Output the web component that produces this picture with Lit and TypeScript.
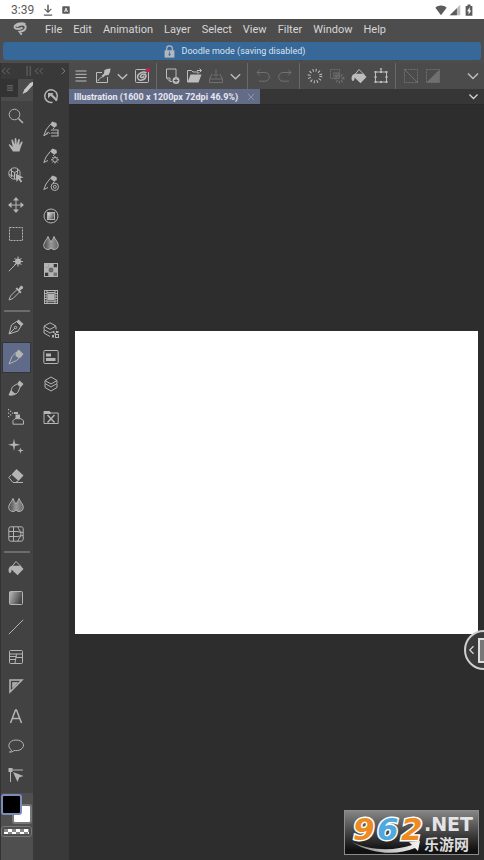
import { LitElement, html, svg, css } from "lit";
import { customElement, property, state } from "lit/decorators.js";
import { classMap } from "lit/directives/class-map.js";

const dropsArt = svg`
  <defs><linearGradient id="dg"><stop offset="0" stop-color="#444"/><stop offset=".5" stop-color="#999"/><stop offset="1" stop-color="#666"/></linearGradient></defs>
  <path class="l" style="fill:url(#dg)" d="M5 1.5C4 4.500 .7 7 .7 10.400a4.100 4.100 0 0 0 7.300 2.600 4.100 4.100 0 0 0 7.300-2.600C15.300 7 12 4.500 11 1.500 10.200 4 8.800 5.400 8 7 7.200 5.400 5.800 4 5 1.500Z"/>`;
const bucketArt = svg`
  <path class="l" d="M3.500 7 8 1.500 13 6.500"/>
  <path class="f" d="M4 5.800h8.500L15.500 9 9.500 15.200 4.800 10.800 3.600 9.600C3.500 12 3 13 2 13S.4 11.600.6 9.600C.8 7.500 2 6.200 4 5.800Z"/>`;
const penLead = svg`
  <path class="f" d="M7 3.500 9.300.5l4.200 1.500.4 3L11 6.500Z"/>
  <path class="l" d="M7.200 3.500 3 9 .8 14.500 5 12.500M11.500 6.500 10 8"/>`;

const art: Record<string, unknown> = {
  zoom: svg`<circle class="l" cx="6.500" cy="6.500" r="5.300"/><path class="l w" d="m10.500 10.500 4.500 4.500"/>`,
  hand: svg`<path class="f" d="M5 14.500 1 8.500c-.6-1 .6-1.600 1.300-.8L4.800 10 3.400 3.600c-.2-1.200 1.200-1.500 1.600-.4L6.700 7.500 6.700 1.900c0-1.200 1.600-1.200 1.700 0l.4 5.500L10.200 2.600c.3-1.200 1.800-.8 1.600.4l-.7 5.300 2-3.200c.6-1 1.800-.3 1.400.7L12.300 11.500 11.500 14.500Z"/>`,
  cube: svg`<circle class="l" cx="6.500" cy="6.500" r="5.700"/><path class="l" d="M2.500 3.500 6.500 5.500 10.500 3.500M6.500 5.500V12M3.500 2v8M9.500 2v5M1 7.500l5.500 2"/><path class="f" d="m7.500 6.500 8 4-3.300.8 2 3.200-1.600 1-2-3.200L8.500 15Z"/>`,
  move: svg`<path class="l" d="M8 2v12M2 8h12"/><path class="f" d="m8 0 3 3.500H5ZM8 16l3-3.500H5ZM0 8l3.500-3v6ZM16 8l-3.500-3v6Z"/>`,
  marquee: svg`<rect class="l" x="1.500" y="1.500" width="13" height="13" stroke-dasharray="2 1"/>`,
  wand: svg`<path class="l" d="M.8 15.200 8 8M10 .5v10M5 5.500h10M6.500 2l7 7M13.500 2l-7 7"/><circle class="f" cx="10" cy="5.500" r="3"/>`,
  dropper: svg`<path class="l" d="M9 4.500 2.500 11 1 15l4-1.500L11.500 7"/><path class="f" d="m7.500 3.500 1.500-1L10.500 4 12.500 1c1-1 3.500 1.200 2.400 2.500L12 5.500 13.500 7l-1 1.500Z"/>`,
  nib: svg`<path class="l" d="M8.500 2.500 3.500 6 1 15l9-3 3.200-5.200ZM1 15 7 9"/><circle class="l" cx="7.500" cy="8.500" r="1.200"/><path class="f" d="m8.500 2.500 2-2L15.500 5l-2.300 2.300Z"/>`,
  pencil: svg`<path class="l" d="M8.500 3 4 7.500 1 15l7.500-3.500L13.500 7"/><path class="f" d="M8 3.500 10.500.5l5 4.500L13 8 10.500 9 7.500 7Z"/>`,
  brush: svg`<path class="l" d="M9 4 5.500 6C3 7.500 4 11 1 15c4 .5 8-.5 9.500-4L12 7"/><path class="f" d="m9 4 2.500-3.500 4 3.500L12.500 7.500ZM1 15c.6-2 1-4 2.500-5 1 2 2.500 3 4.500 3.500C6 15 3.500 15.500 1 15Z"/>`,
  airbrush: svg`<path class="f" d="M0 0h1.200v1.200H0ZM0 3.500h1.200v1.200H0ZM0 7h1.200v1.200H0ZM2 1.700h1.200v1.200H2ZM2 5.200h1.200v1.200H2ZM4 3.500h1.200v1.200H4ZM6 3h4v2H6Z"/><path class="l" d="M5 15.200v-3.500l2-2h6l2.500 2v3.500Z"/><path class="f" d="M7.500 5.500H12v4H7.500Z"/>`,
  sparkle: svg`<path class="f" d="M6 .5 7 5.500 12.500 6.800 7 8 6 13 5 8 0 6.800 5 5.500ZM12.500 9.500l.7 2.300 2.600.7-2.600.7-.7 2.600-.7-2.600-2.300-.7 2.300-.7Z"/>`,
  eraser: svg`<path class="f" d="m8.500 1 7 6.500-5 5.500-7-6.500Z"/><path class="l" d="M3 7 .8 9.500 5 14.500h2.500L10 13M6 14.500h9"/>`,
  drops: dropsArt,
  mesh: svg`<rect class="l" x=".8" y=".8" width="14.400" height="14.400" rx="2"/><path class="l" d="M1 5.500h8l6 1M1 10.500h8l6-1M5.500 1v14M10 1c0 2 3 4 3 7s-3 5-3 7"/>`,
  bucket: bucketArt,
  gradient: svg`<defs><linearGradient id="gg" y2=".4"><stop offset="0" stop-color="#bbb"/><stop offset="1" stop-color="#444"/></linearGradient></defs><rect class="l" x="1.500" y="1.500" width="13" height="13" rx="1" style="fill:url(#gg)"/>`,
  line: svg`<path class="l" d="M.8 15.200 15.200.8"/>`,
  frame: svg`<rect class="l" x="1.500" y="1.500" width="13" height="13" rx="1"/><path class="l" d="M1.500 5h13M1.500 10.500h6M8.500 5 7 14M8 8.500h6.500M1.500 7.500h7"/>`,
  ruler: svg`<path class="l w" d="M2 2h12L2 14ZM5 5h3.500L5 8.500Z"/>`,
  text: svg`<path class="l w" d="m2.500 15 5-13h1l5 13M4.300 10.500h7.400"/>`,
  balloon: svg`<path class="l" d="M3.500 12C-1.500 9 .8 2 8 2s10 6 5 9.300C10.500 13 8 12.600 6 12.500 5 13.800 3 14.300 1.500 14 3 13.500 3.500 13 3.500 12Z"/>`,
  node: svg`<path class="f" d="M.5 1h4v4h-4ZM5 5l10.500 4-4.300 1.500L9.500 15Z"/><path class="l" d="M4 3h11M2.500 5v10"/>`,
  quick: svg`<path class="l w" d="M12.500 12.500A6.300 6.300 0 1 0 9.500 14.200M12.500 12.500A6.300 6.300 0 0 0 14.200 7"/><path class="f" d="M5 5h5.500L9.300 6.300l5.500 5.500-1.500 1.500L7.500 7.800 5 10.500Z"/>`,
  penList: svg`${penLead}<path class="l" d="M1 15c4-5 5-4 6-2M8 9h7.500M8 12h7.500M8 15h7.500M15 9v6"/>`,
  penGear: svg`${penLead}<circle class="l" cx="12" cy="11.800" r="2.300"/><path class="l" d="M12 8v1.500M12 14v1.500M8 11.800h1.500M14.500 11.800H16M9.300 9l1 1M13.700 13.500l1 1M14.700 9l-1 1M9.300 14.500l1-1"/>`,
  penRing: svg`${penLead}<circle class="l" cx="11.800" cy="11.800" r="3.700"/><circle class="l" cx="11.800" cy="11.800" r="1.500"/>`,
  wheel: svg`<defs><linearGradient id="wg" y2=".6"><stop offset="0" stop-color="#eee"/><stop offset="1" stop-color="#555"/></linearGradient></defs><circle class="l" cx="8" cy="8" r="7"/><rect class="l" x="4.500" y="4.500" width="7" height="7" style="fill:url(#wg)"/>`,
  palette: svg`<rect class="l" x="1.500" y="1.500" width="13" height="13"/><path class="f" d="M6 2h4v3.500H6ZM2 2h3.500v3.500H2ZM2 6h3.500v4H2ZM10.500 6H14v4h-3.500ZM6 10.500h4V14H6Z"/><path class="f" opacity=".5" d="M10.500 10.500H14V14h-3.500ZM7 7h2v2H7Z"/><path class="l" d="M5.800 2v12M10.200 2v12M2 5.800h12M2 10.200h12"/>`,
  film: svg`<rect class="l" x="1.500" y="1.500" width="13" height="13"/><path class="f" d="M4.500 4.500h7v7h-7Z"/><path class="l" d="M4 1.500v13M12 1.500v13M4 3.500h8M2 4.500h2M2 7h2M2 9.500h2M2 12h2M12 4.500h2M12 7h2M12 9.500h2M12 12h2M4 12.700h8"/>`,
  layers: svg`<path class="l" d="m8 1 6 3.500L8 8 2 4.500ZM2 4.500v3L8 11l6-3.500v-3M2 8v3.500L8 15l6-3.500V8"/>`,
  layersPlus: svg`<path class="l" d="m7 .8 6 3.300-6 3.300-6-3.300ZM1 4.500v3L7 11l2-1M1 8v3L7 14.500M13 4.500v3"/><path class="f" d="M9.500 9h2v2h-2ZM13 9h2.500v2H13ZM9 13h2v2.500H9ZM11.500 11h1.500v2h-1.500Z"/><rect class="l" x="12.500" y="12.500" width="3" height="3"/>`,
  props: svg`<rect class="l" x=".8" y="1.500" width="14.400" height="13" rx="1"/><path class="f" d="M3 4.500h5v3H3ZM3 9h9.500v3H3Z"/>`,
  folderX: svg`<path class="l" d="M1 14.500v-12h5L7.500 4h7.700v10.500Z"/><path class="f" d="M1 2h5.500L8 4v1H1Z"/><path class="l w" d="m4.500 6 7 7.500M11.500 6l-7 7.500"/>`,
  menu: svg`<path class="l" d="M2.500 3h11M2.500 6.300h11M2.500 9.600h11M2.500 13h11"/>`,
  lines: svg`<path class="l w" d="M2 3.500h12M2 8h12M2 12.500h12"/>`,
  penEdit: svg`<path class="l" d="M7 4.500H1.500v10h11V9"/><path class="f" d="M9.500 2 12 1l3.500-.5L15 4l-1.500 3-3.500.5L8 9.500 6.500 8l2.500-2.500Z"/><path class="l" d="M3 13c2-4 3-3 4.500-4"/>`,
  chevron: svg`<path class="l w" d="m3 5.500 5 5 5-5" />`,
  spiral: svg`<rect class="l" x="1.500" y="1.500" width="13" height="13" rx="1"/><path class="l w" d="M12.500 5C9 2.500 3.500 6 3.500 9s3 4 6 2.500S13 6 10 6 5 9 7.500 9.500 10 7.500 10 7.500"/><circle cx="14" cy="2" r="2.300" fill="#b32650"/>`,
  newDoc: svg`<path class="l" d="M8 13.500H6L2.500 10V1h9.500v8"/><path class="l" d="M2.500 10H6v3.500"/><circle class="f" cx="12" cy="12.500" r="3.500"/><path d="M10 12.500h4M12 10.500v4" stroke="#4b4b4b"/>`,
  open: svg`<path class="l" d="M1.500 14V2.500h4L7 4h5v2M11 2.500h4.500M13.500.5l2 2-2 2"/><path class="f" d="M4.500 6.500H15.500L12.500 14.500H1.500Z"/>`,
  save: svg`<path class="l" d="M4 6 1.500 11v3.500h13V11L12 6M1.500 11h13M8 1v7M5.500 6 8 8.500 10.500 6"/>`,
  undo: svg`<path class="l" d="M5 1.500 2 4.500l3 3M2 4.500h8a4.300 4.300 0 0 1 0 8.700H4"/>`,
  redo: svg`<path class="l" d="m11 1.500 3 3-3 3M14 4.500H6a4.300 4.300 0 0 0 0 8.700h6"/>`,
  burst: svg`<circle class="l" cx="8" cy="8" r="5.800" style="stroke-width:3" stroke-dasharray="1 2.036"/>`,
  clearOut: svg`<rect class="l" x="1.500" y="1.500" width="9" height="9" stroke-dasharray="2 1"/><circle class="l" cx="10.500" cy="10.500" r="3.500" style="stroke-width:3" stroke-dasharray="1 1.500"/><path class="f" d="M4 4h6v6H4Z" opacity=".5"/>`,
  transform: svg`<rect class="l" x="2.500" y="4" width="11" height="10"/><path class="l" d="M8 0v4"/><path class="f" d="M1.500 3h2v2h-2ZM12.500 3h2v2h-2ZM1.500 13h2v2h-2ZM12.500 13h2v2h-2ZM7 3h2v2H7ZM7 13h2v2H7ZM1.500 8h2v2h-2ZM12.500 8h2v2h-2ZM6.500 1.500 8 0l1.500 1.500Z"/>`,
  deselect: svg`<rect class="l" x="1.500" y="1.500" width="13" height="13" stroke-dasharray="2 1"/><path class="l" d="m1 1 14 14"/>`,
  invert: svg`<rect class="l" x="1.500" y="1.500" width="13" height="13" stroke-dasharray="2 1"/><path class="f" d="M14.500 1.500v13h-13Z"/>`,
  close: svg`<path class="l" d="m3 3 10 10M13 3 3 13"/>`,
  logo: svg`<path class="l" style="stroke-width:2.200" d="M14 2.500C9-.5 2 3 1.800 5.500S7 9 11 6.500M4 5.500C8 2 14.500 2 14.500 6S9 11 7.500 11.200L10 14.500"/>`,
  lock: svg`<path class="l w" d="M4.500 7V4.500a3.500 3.500 0 0 1 7 0V7"/><rect class="f" x="2" y="6.500" width="12" height="9"/><path d="M8 8v5M6.300 11.300 8 13l1.700-1.700" stroke="#36689a" fill="none"/>`,
  download: svg`<path class="f" d="M7 1h2v8l3-3 1 1-5 5-5-5 1-1 3 3ZM2.500 14h11v1.500h-11Z"/>`,
  badge: svg`<rect class="f" x=".5" y=".5" width="15" height="15" rx="1.500"/><path d="m5 12 3-8 3 8M6 9.500h4" stroke="#fff" stroke-width="1.600" fill="none"/>`,
  wifi: svg`<path class="f" d="M8 15 .5 5C4 1 12 1 15.500 5Z"/>`,
  signal: svg`<path class="f" d="M15 1v14H1Z" opacity=".4"/><path class="f" d="M10.500 5.500V15H1Z"/>`,
  battery: svg`<path class="f" d="M3.500 2.500h2.500V.5h4v2h2.500v13h-9Z"/><path d="M9 4 5.500 9.500h2V14L11 8.500H9Z" fill="#fff"/>`,
  left2: svg`<path class="l" d="M7 3 2 8l5 5M14 3 9 8l5 5"/>`,
  right: svg`<path class="l w" d="m6 3 5 5-5 5"/>`,
  grip: svg`<path class="l" d="M6.500 0v16M11.500 0v16"/>`,
  slant: svg`<path class="f" d="M2 16 4.500 10 12 1.500 15 0h1v4L8 13Z"/>`,
};

@customElement("app-icon")
export class AppIcon extends LitElement {
  @property() name = "";
  static styles = css`
    :host { display: inline-flex; width: 16px; height: 16px; flex: none; }
    svg { display: block; width: 100%; height: 100%; overflow: visible; }
    .l { fill: none; stroke: currentColor; stroke-width: 1; }
    .w { stroke-width: 1.500; }
    .f { fill: currentColor; }
  `;
  render() {
    return html`<svg viewBox="0 0 16 16" aria-hidden="true">${art[this.name]}</svg>`;
  }
}

const menus = ["File", "Edit", "Animation", "Layer", "Select", "View", "Filter", "Window", "Help"];
const toolGroups = [
  ["zoom", "hand", "cube", "move", "marquee", "wand", "dropper"],
  ["nib", "pencil", "brush", "airbrush", "sparkle", "eraser", "drops", "mesh"],
  ["bucket", "gradient", "line", "frame", "ruler", "text", "balloon", "node"],
];
const paletteGroups = [
  ["quick"],
  ["penList", "penGear", "penRing"],
  ["wheel", "drops", "palette", "film"],
  ["layersPlus", "props", "layers"],
  ["folderX"],
];
const commandGroups = [
  ["menu", "penEdit", "chevron", "spiral"],
  ["newDoc", "open", "save", "chevron"],
  ["undo", "redo"],
  ["burst", "clearOut", "bucket", "transform"],
  ["deselect", "invert"],
];
const disabledCommands = new Set(["save", "undo", "redo", "clearOut", "deselect", "invert"]);

@customElement("app-root")
export class AppRoot extends LitElement {
  @state() private tool = "pencil";

  static styles = css`
    :host {
      display: flex; flex-direction: column; min-height: 100vh;
      background: #4d4d4d; color: #d6d6d6;
      font-family: Roboto, "Noto Sans CJK SC", sans-serif; font-size: 11px;
    }
    * { box-sizing: border-box; }
    button {
      display: flex; align-items: center; justify-content: center;
      padding: 0; border: 0; background: none; color: inherit; font: inherit;
    }
    .status {
      display: flex; align-items: center; height: 19px; padding: 0 9px 0 11px;
      background: #fff; color: #5c5c5c; font-size: 12px;
    }
    .status app-icon { width: 12px; height: 12px; }
    .status .small { width: 8px; height: 8px; }
    .left { display: flex; align-items: center; gap: 8px; flex: 1; }
    .right { display: flex; align-items: center; gap: 2px; }
    .menubar { display: flex; align-items: center; height: 22px; padding: 0 0 2px 13px; }
    .menubar app-icon { width: 14px; height: 14px; margin-right: 18px; color: #b8b8b8; }
    .menus { display: flex; gap: 11px; }
    .banner {
      display: flex; align-items: center; justify-content: center; gap: 6px;
      height: 18px; margin: 1px 3px 3px; padding-right: 16px; border-radius: 3px;
      background: #36689a; font-size: 9px; color: #dbe3ec;
    }
    .banner app-icon { width: 13px; height: 13px; color: #b4b8bc; }
    .body { display: flex; flex: 1; }
    .tools { display: flex; flex-direction: column; width: 33px; background: #424242; border-left: 1px solid #333; }
    .head {
      display: flex; align-items: center; justify-content: space-between;
      height: 16px; background: #393939; color: #858585;
    }
    .head app-icon { width: 10px; height: 10px; }
    .tabs { display: flex; height: 22px; border-bottom: 4px solid #4c4c4c; background: #4c4c4c; color: #858585; }
    .tabs button { width: 17px; background: #333; }
    .tabs .on { width: 15px; background: none; color: #c8c8c8; overflow: hidden; justify-content: flex-end; }
    .tabs app-icon { width: 8px; height: 8px; }
    .tabs .on app-icon { width: 12px; height: 12px; }
    .group { display: flex; flex-direction: column; flex: 7 1 0; align-items: center; padding-right: 2px; }
    .group.long { flex-grow: 8; }
    .group button { flex: 1; width: 29px; color: #b4b4b4; }
    .group button.picked { background: #5f6b88; border: 1px solid #303540; }
    .rule { height: 2px; margin: 2px 3px 0; background: #6c6c6c; }
    .swatches { height: 67px; margin-top: 3px; background: #4f4f4f; position: relative; }
    .swatches button { position: absolute; border-radius: 3px; }
    .front { z-index: 1; left: 0; top: 1px; width: 21px; height: 21px; background: #000; border: 2px solid #7b8dbb; }
    .back { left: 11px; top: 11px; width: 20px; height: 20px; background: #fff; border: 2px solid #777; }
    .swatches .clear {
      left: 0; top: 33px; width: 31px; height: 11px; padding: 2px; border: 1px solid #777;
      background: repeating-conic-gradient(#fff 0 25%, #888 0 50%) 0 0 / 8px 6px content-box;
    }
    .palettes { display: flex; flex-direction: column; width: 36px; background: #393939; }
    .palettes .head { padding: 0 1px; margin-bottom: 3px; }
    .stack { display: flex; flex-direction: column; gap: 6px; }
    .set button { width: 35px; height: 27px; color: #b4b4b4; }
    .main { display: flex; flex-direction: column; flex: 1; min-width: 0; background: #2d2d2d; }
    .commands { display: flex; height: 26px; padding-left: 1px; background: #4b4b4b; color: #bdbdbd; }
    .commands button { width: 22px; }
    .commands button.narrow { width: 17px; }
    .commands .narrow app-icon { width: 15px; height: 15px; }
    .commands button:disabled { color: #707070; }
    .commands button.more { width: 22px; margin-left: auto; }
    .cmds { display: flex; }
    .cmds + .cmds { padding-left: 4px; margin-left: 3px; border-left: 1px solid #6a6a6a; }
    .docbar { display: flex; align-items: center; height: 16px; background: #363636; border-bottom: 1px solid #2a2a2a; }
    .doc {
      display: flex; align-items: center; height: 15px; gap: 8px; padding: 0 4px 0 5px;
      background: #626c88; color: #e6e8ee; font-size: 9px; font-weight: 700; white-space: nowrap;
    }
    .doc app-icon { width: 10px; height: 10px; color: #a9aebc; }
    .docbar .list { width: 22px; margin-left: auto; }
    .list app-icon { width: 13px; height: 13px; }
    .space { position: relative; display: flex; align-items: center; flex: 1; padding: 0 6px; overflow: hidden; }
    .sheet { flex: 1; aspect-ratio: 4 / 3; background: #fff; }
    .space .handle {
      position: absolute; right: -20px; top: 525px; width: 40px; height: 40px;
      border: 2px solid #cfcfcf; border-radius: 50%; background: #3b3b3b; color: #e0e0e0; justify-content: flex-start;
    }
    .handle app-icon { width: 12px; height: 14px; transform: scaleX(-1); }
    .panel { width: 9px; height: 25px; border: 2px solid #ddd; border-right: 0; background: #777; }
    .mark {
      position: absolute; right: 5px; bottom: 5px; width: 135px; height: 45px;
      border: 1px solid #8c8c8c; background: linear-gradient(#858585, #111 90%);
    }
    .mark svg { display: block; width: 100%; height: 100%; }
    .num { font: italic 700 31px "DejaVu Sans", sans-serif; stroke: #fff; stroke-width: 3px; paint-order: stroke; }
    .net { font: 700 19px "DejaVu Sans", sans-serif; fill: #e4e4e4; }
    .cn { font: 700 15px "Noto Sans CJK SC", sans-serif; fill: #dcdcdc; }
    .orange { fill: #ee8a22; }
    .blue { fill: #50a9de; }
  `;

  private toolGroup(names: string[]) {
    return html`<div class=${classMap({ group: true, long: names.length === 8 })}>
      ${names.map((n) => html`<button class=${classMap({ picked: this.tool === n })} aria-label=${n}
        @click=${() => (this.tool = n)}><app-icon name=${n}></app-icon></button>`)}
    </div>`;
  }

  render() {
    return html`
      <header>
        <div class="status">
          <div class="left"><span>3:39</span><app-icon name="download"></app-icon><app-icon class="small" name="badge"></app-icon></div>
          <div class="right"><app-icon name="wifi"></app-icon><app-icon name="signal"></app-icon><app-icon name="battery"></app-icon></div>
        </div>
        <div class="menubar">
          <app-icon name="logo"></app-icon>
          <nav class="menus">${menus.map((m) => html`<button>${m}</button>`)}</nav>
        </div>
        <div class="banner"><app-icon name="lock"></app-icon><span>Doodle mode (saving disabled)</span></div>
      </header>
      <div class="body">
        <aside class="tools">
          <div class="head"><app-icon name="left2"></app-icon><app-icon name="grip"></app-icon></div>
          <div class="tabs">
            <button aria-label="Tool list"><app-icon name="lines"></app-icon></button>
            <button class="on" aria-label="Pen tab"><app-icon name="slant"></app-icon></button>
          </div>
          ${toolGroups.map((g, i) => html`${i ? html`<div class="rule"></div>` : ""}${this.toolGroup(g)}`)}
          <div class="swatches">
            <button class="front" aria-label="Main colour"></button>
            <button class="back" aria-label="Sub colour"></button>
            <button class="clear" aria-label="Transparent colour"></button>
          </div>
        </aside>
        <aside class="palettes">
          <div class="head"><app-icon name="left2"></app-icon><app-icon name="right"></app-icon></div>
          <div class="stack">
            ${paletteGroups.map((g) => html`<div class="set">${g.map((n) => html`<button aria-label=${n}><app-icon name=${n}></app-icon></button>`)}</div>`)}
          </div>
        </aside>
        <main class="main">
          <div class="commands">
            ${commandGroups.map((g) => html`<div class="cmds">${g.map((n) => html`<button
              class=${classMap({ narrow: n === "chevron" })} aria-label=${n}
              ?disabled=${disabledCommands.has(n)}><app-icon name=${n}></app-icon></button>`)}</div>`)}
            <button class="more" aria-label="More"><app-icon name="chevron"></app-icon></button>
          </div>
          <div class="docbar">
            <div class="doc"><span>Illustration (1600 x 1200px 72dpi 46.9%)</span><button aria-label="Close"><app-icon name="close"></app-icon></button></div>
            <button class="list" aria-label="Documents"><app-icon name="chevron"></app-icon></button>
          </div>
          <div class="space">
            <div class="sheet"></div>
            <button class="handle" aria-label="Open side panel"><app-icon name="right"></app-icon><span class="panel"></span></button>
            <div class="mark">
              <svg viewBox="0 0 133 43">
                <defs><linearGradient id="sw"><stop offset="0" stop-color="#888"/><stop offset="1" stop-color="#f4f4f4"/></linearGradient></defs>
                <text class="num" y="29"><tspan class="orange" x="8">9</tspan><tspan class="blue" x="32">6</tspan><tspan class="orange" x="56">2</tspan></text>
                <path fill="url(#sw)" d="M7 31C25 40 50 40 67 34L64 31 75 30 73 40 70 37C52 45 25 43 7 31Z"/>
                <text class="net" x="79" y="20">.NET</text>
                <text class="cn" x="79" y="39">乐游网</text>
              </svg>
            </div>
          </div>
        </main>
      </div>
    `;
  }
}
